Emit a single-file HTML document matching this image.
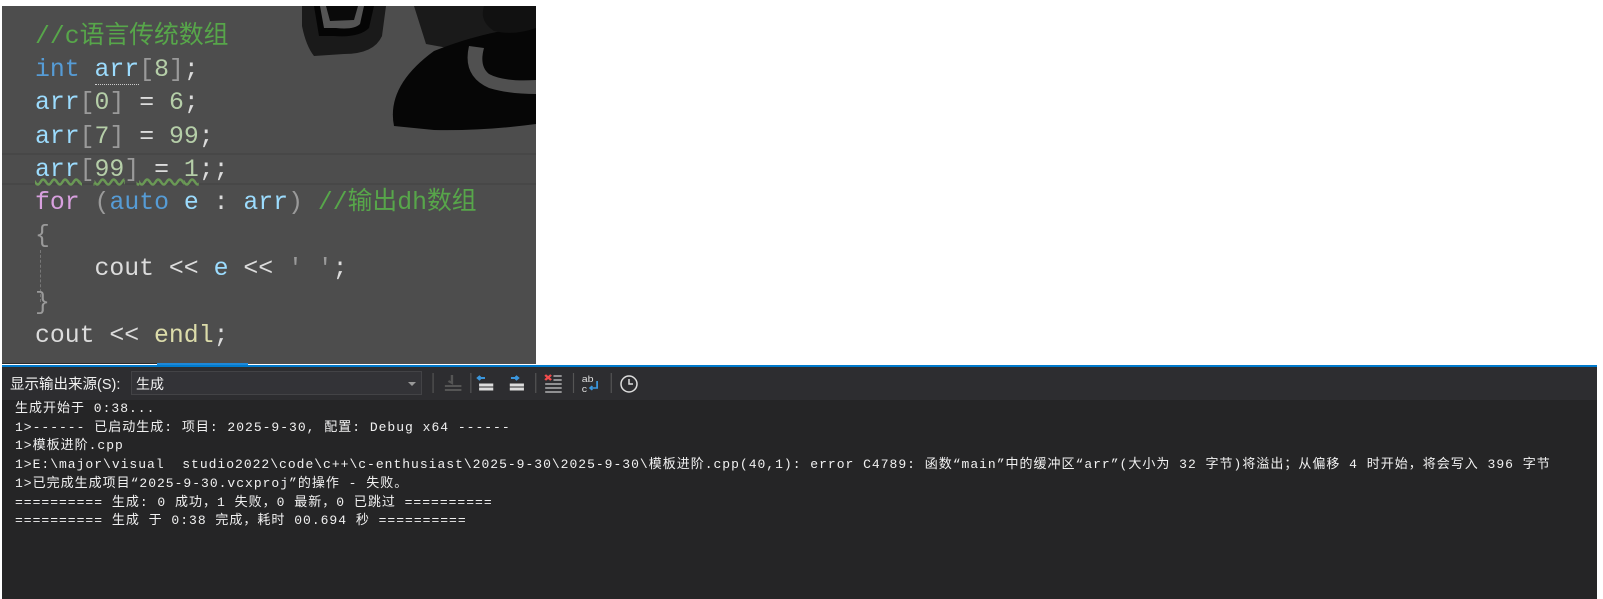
<!DOCTYPE html>
<html><head><meta charset="utf-8"><style>
html,body{margin:0;padding:0;background:#fff;width:1603px;height:599px;overflow:hidden;position:relative}
.ed{position:absolute;left:2px;top:6px;width:534px;height:358px;background:#4d4d4d;overflow:hidden}
.code{position:absolute;left:33px;top:15px;font-family:"Liberation Mono","Noto Sans CJK SC",monospace;font-size:24.8px;line-height:33.2px;color:#dcdcdc;white-space:pre}
.c{color:#57a64a}.k{color:#569cd6}.v{color:#9cdcfe}.n{color:#b5cea8}.f{color:#d8a0df}.fn{color:#dcdcaa}.g{color:#9a9a9a}
.cur{position:absolute;left:0;top:147px;width:534px;height:28px;border-top:2px solid #474747;border-bottom:2px solid #474747}
.tb{position:absolute;left:2px;top:367px;width:1595px;height:33px;background:#2d2d30}
.out{position:absolute;left:2px;top:400px;width:1595px;height:199px;background:#252526}
.txt{position:absolute;left:15px;top:400px;font-family:"Liberation Mono","Noto Sans CJK SC",monospace;font-size:13px;line-height:18.7px;letter-spacing:1px;color:#f1f1f1;white-space:pre}
</style></head><body>
<div class="ed">
<svg width="534" height="358" style="position:absolute;left:0;top:0">
<g transform="translate(12,0)">
<path d="M288 0 L372 0 L368 30 Q360 48 330 48 L300 50 Q292 40 288 20Z" fill="#1a1a1a"/>
<path d="M300 0 L360 0 L355 22 Q345 32 320 30 L305 30Z" fill="#050505"/>
<path d="M306 0 L350 0 L346 18 Q340 24 322 22 L310 22Z" fill="#555"/>
<path d="M312 0 L344 0 L340 14 L316 15Z" fill="#0a0a0a"/>
<path d="M400 0 L522 0 L522 40 Q480 40 445 44 L412 38Z" fill="#1a1a1a"/>
<path d="M380 120 Q372 80 420 45 Q470 25 522 20 L522 118 Q470 125 420 124Z" fill="#060606"/>
<path d="M455 40 Q448 70 475 82 Q495 88 522 88 L522 74 Q490 76 475 68 Q465 60 470 42Z" fill="#505050"/>
<path d="M470 0 Q465 15 480 25 Q500 30 522 22 L522 0Z" fill="#111"/>
</g>
</svg>
<div class="cur"></div>
<div style="position:absolute;left:38px;top:244px;height:52px;border-left:1px dashed #777"></div>
<div class="code"><span class="c">//c语言传统数组</span>
<span class="k">int</span> <span class="v" style="border-bottom:1px dotted #ccc">arr</span><span class="g">[</span><span class="n">8</span><span class="g">]</span>;
<span class="v">arr</span><span class="g">[</span><span class="n">0</span><span class="g">]</span> = <span class="n">6</span>;
<span class="v">arr</span><span class="g">[</span><span class="n">7</span><span class="g">]</span> = <span class="n">99</span>;
<span style="text-decoration:underline wavy #6a9955"><span class="v">arr</span><span class="g">[</span><span class="n">99</span><span class="g">]</span> = <span class="n">1</span></span>;;
<span class="f">for</span> <span class="g">(</span><span class="k">auto</span> <span class="v">e</span> : <span class="v">arr</span><span class="g">)</span> <span class="c">//输出dh数组</span>
<span class="g">{</span>
    cout &lt;&lt; <span class="v">e</span> &lt;&lt; <span class="g">' '</span>;
<span class="g">}</span>
cout &lt;&lt; <span class="fn">endl</span>;</div>
</div>
<div style="position:absolute;left:2px;top:363px;width:155px;height:1px;background:#2a2a2a"></div>
<div style="position:absolute;left:157px;top:363px;width:91px;height:3px;background:#1e88d8"></div>
<div style="position:absolute;left:2px;top:365px;width:1595px;height:2px;background:#007acc"></div>
<div class="tb">
<div style="position:absolute;left:8px;top:6px;font-family:'Liberation Sans','Noto Sans CJK SC',sans-serif;font-size:14.5px;color:#f1f1f1">显示输出来源(S):</div>
<div style="position:absolute;left:129px;top:4px;width:289px;height:22px;background:#333337;border:1px solid #434346">
<span style="position:absolute;left:4px;top:2px;font-family:'Liberation Sans','Noto Sans CJK SC',sans-serif;font-size:14px;color:#f1f1f1">生成</span>
<span style="position:absolute;right:5px;top:10px;border-left:4px solid transparent;border-right:4px solid transparent;border-top:4px solid #999"></span></div>
<svg width="240" height="33" style="position:absolute;left:424px;top:0" stroke-width="2" fill="none">
<g transform="scale(1.18,1)">
<line x1="6" y1="6" x2="6" y2="26" stroke="#555" stroke-width="1"/>
<path d="M16 19h14M16 23h14" stroke="#555"/><path d="M22 8v8l-3-2" stroke="#555"/>
<line x1="38" y1="6" x2="38" y2="26" stroke="#555" stroke-width="1"/>
<path d="M50 11h-6m2-2l-2 2 2 2" stroke="#3a96dd"/><path d="M45 18h12M45 22h12" stroke="#ddd" stroke-width="3"/>
<path d="M72 11h6m-2-2l2 2-2 2" stroke="#3a96dd"/><path d="M71 18h12M71 22h12" stroke="#ddd" stroke-width="3"/>
<line x1="93" y1="6" x2="93" y2="26" stroke="#555" stroke-width="1"/>
<path d="M101 8l5 5m0-5l-5 5" stroke="#f14c4c"/><path d="M108 9h7M108 13h7M101 17h14M101 21h14M101 25h14" stroke="#ccc" stroke-width="1.3"/>
<line x1="125" y1="6" x2="125" y2="26" stroke="#555" stroke-width="1"/>
<text x="132" y="15" font-size="9" fill="#ddd" stroke="none" font-family="Liberation Sans">ab</text><text x="132" y="25" font-size="9" fill="#ddd" stroke="none" font-family="Liberation Sans">c</text>
<path d="M145 14v7h-6m2-2l-2 2 2 2" stroke="#3a96dd" stroke-width="1.5"/>
<line x1="157" y1="6" x2="157" y2="26" stroke="#555" stroke-width="1"/>
</g>
<circle cx="203" cy="17" r="8" stroke="#ddd" stroke-width="1.5"/><path d="M203 12v5h4" stroke="#ddd" stroke-width="1.5"/>
</svg>
</div>
<div class="out"></div>
<div class="txt">生成开始于 0:38...
1&gt;------ 已启动生成: 项目: 2025-9-30, 配置: Debug x64 ------
1&gt;模板进阶.cpp
1&gt;E:\major\visual  studio2022\code\c++\c-enthusiast\2025-9-30\2025-9-30\模板进阶.cpp(40,1): error C4789: 函数“main”中的缓冲区“arr”(大小为 32 字节)将溢出；从偏移 4 时开始，将会写入 396 字节
1&gt;已完成生成项目“2025-9-30.vcxproj”的操作 - 失败。
========== 生成: 0 成功，1 失败，0 最新，0 已跳过 ==========
========== 生成 于 0:38 完成，耗时 00.694 秒 ==========</div>
</body></html>
